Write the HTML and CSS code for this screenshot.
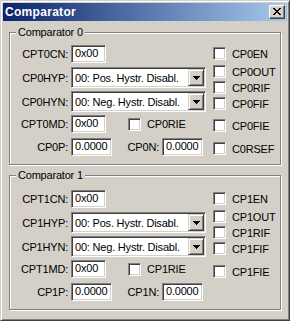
FILE: index.html
```html
<!DOCTYPE html>
<html>
<head>
  <title>Comparator</title>
  <link rel="stylesheet" href="styles.css">
</head>
<body>
<div class="window">
  <div class="titlebar">
    <span class="title">Comparator</span>
    <div class="close">
      <svg width="8" height="7" viewBox="0 0 8 7" shape-rendering="crispEdges">
        <path d="M0 0h2v1h-2z M6 0h2v1h-2z M1 1h2v1h-2z M5 1h2v1h-2z M2 2h4v1h-4z M3 3h2v1h-2z M2 4h4v1h-4z M1 5h2v1h-2z M5 5h2v1h-2z M0 6h2v1h-2z M6 6h2v1h-2z" fill="#000"/>
      </svg>
    </div>
  </div>

  <!-- Comparator 0 -->
  <div class="group g0">
    <span class="legend">Comparator 0</span>
    <div class="cols">
      <div class="left">
        <div class="row r1"><span class="lbl">CPT0CN:</span><span class="edit short">0x00</span></div>
        <div class="row r2"><span class="lbl">CP0HYP:</span>
          <div class="combo"><span class="val">00: Pos. Hystr. Disabl.</span><span class="drop"><svg width="7" height="4" viewBox="0 0 7 4" shape-rendering="crispEdges"><path d="M0 0h7v1h-7z M1 1h5v1h-5z M2 2h3v1h-3z M3 3h1v1h-1z" fill="#000"/></svg></span></div>
        </div>
        <div class="row r3"><span class="lbl">CP0HYN:</span>
          <div class="combo"><span class="val">00: Neg. Hystr. Disabl.</span><span class="drop"><svg width="7" height="4" viewBox="0 0 7 4" shape-rendering="crispEdges"><path d="M0 0h7v1h-7z M1 1h5v1h-5z M2 2h3v1h-3z M3 3h1v1h-1z" fill="#000"/></svg></span></div>
        </div>
        <div class="row r4"><span class="lbl">CPT0MD:</span><span class="edit short">0x00</span>
          <div class="check mid"><span class="box"></span>CP0RIE</div>
        </div>
        <div class="row r5"><span class="lbl">CP0P:</span><span class="edit num">0.0000</span>
          <span class="lbl2">CP0N:</span><span class="edit num">0.0000</span>
        </div>
      </div>
      <div class="right">
        <div class="check c1"><span class="box"></span>CP0EN</div>
        <div class="check c2"><span class="box"></span>CP0OUT</div>
        <div class="check c3"><span class="box"></span>CP0RIF</div>
        <div class="check c4"><span class="box"></span>CP0FIF</div>
        <div class="check c5"><span class="box"></span>CP0FIE</div>
        <div class="check c6"><span class="box"></span>C0RSEF</div>
      </div>
    </div>
  </div>

  <!-- Comparator 1 -->
  <div class="group g1">
    <span class="legend">Comparator 1</span>
    <div class="cols">
      <div class="left">
        <div class="row r1"><span class="lbl">CPT1CN:</span><span class="edit short">0x00</span></div>
        <div class="row r2"><span class="lbl">CP1HYP:</span>
          <div class="combo"><span class="val">00: Pos. Hystr. Disabl.</span><span class="drop"><svg width="7" height="4" viewBox="0 0 7 4" shape-rendering="crispEdges"><path d="M0 0h7v1h-7z M1 1h5v1h-5z M2 2h3v1h-3z M3 3h1v1h-1z" fill="#000"/></svg></span></div>
        </div>
        <div class="row r3"><span class="lbl">CP1HYN:</span>
          <div class="combo"><span class="val">00: Neg. Hystr. Disabl.</span><span class="drop"><svg width="7" height="4" viewBox="0 0 7 4" shape-rendering="crispEdges"><path d="M0 0h7v1h-7z M1 1h5v1h-5z M2 2h3v1h-3z M3 3h1v1h-1z" fill="#000"/></svg></span></div>
        </div>
        <div class="row r4"><span class="lbl">CPT1MD:</span><span class="edit short">0x00</span>
          <div class="check mid"><span class="box"></span>CP1RIE</div>
        </div>
        <div class="row r5"><span class="lbl">CP1P:</span><span class="edit num">0.0000</span>
          <span class="lbl2">CP1N:</span><span class="edit num">0.0000</span>
        </div>
      </div>
      <div class="right">
        <div class="check c1"><span class="box"></span>CP1EN</div>
        <div class="check c2"><span class="box"></span>CP1OUT</div>
        <div class="check c3"><span class="box"></span>CP1RIF</div>
        <div class="check c4"><span class="box"></span>CP1FIF</div>
        <div class="check c5"><span class="box"></span>CP1FIE</div>
      </div>
    </div>
  </div>
</div>
</body>
</html>
```

FILE: styles.css
```css
body {
  margin: 0;
  font-family: "Liberation Sans", Arial, sans-serif;
  font-size: 11px;
  letter-spacing: -0.2px;
  color: #000;
  background: #d4d0c8;
}

/* window frame */
.window {
  width: 290px;
  height: 321px;
  box-sizing: border-box;
  border: 1px solid;
  border-color: #d4d0c8 #404040 #404040 #d4d0c8;
  box-shadow: inset 1px 1px 0 #fff, inset -1px -1px 0 #808080;
  padding: 2px;
  background: #d4d0c8;
}
.titlebar {
  height: 18px;
  display: flex;
  align-items: center;
  justify-content: space-between;
  padding: 0 2px;
  background: linear-gradient(to right, #0a246a, #a6caf0);
}
.title {
  color: #fff;
  font-weight: bold;
  font-size: 12px;
  letter-spacing: 0.3px;
  line-height: 14px;
  margin-top: -1px;
}
.close {
  width: 16px;
  height: 14px;
  box-sizing: border-box;
  border: 1px solid;
  border-color: #fff #404040 #404040 #fff;
  box-shadow: inset -1px -1px 0 #808080;
  background: #d4d0c8;
  display: flex;
  align-items: center;
  justify-content: center;
}
.close svg {
  display: block;
  margin-top: -1px;
}

/* group boxes */
.group {
  position: relative;
  box-sizing: border-box;
  width: 272px;
  margin-left: 6px;
  border: 1px solid #808080;
  box-shadow: 1px 1px 0 #fff, inset 1px 1px 0 #fff;
}
.g0 {
  margin-top: 11px;
  height: 133px;
}
.g1 {
  margin-top: 10px;
  height: 135px;
}
.legend {
  position: absolute;
  top: -7px;
  left: 6px;
  padding: 0 2px;
  line-height: 13px;
  background: #d4d0c8;
}
.cols {
  display: flex;
}
.left {
  width: 203px;
}

/* rows of label + field */
.row {
  display: flex;
  align-items: center;
}
.lbl {
  width: 58px;
  margin-right: 3px;
  text-align: right;
  white-space: nowrap;
}
.lbl2 {
  width: 47px;
  margin-right: 3px;
  text-align: right;
}
.r1 { margin-top: 12px; }
.r2 { margin-top: 4px; }
.r3 { margin-top: 3px; }
.r4 { margin-top: 3px; }
.r5 { margin-top: 5px; }
.g1 .r1 { margin-top: 14px; }

.edit {
  box-sizing: border-box;
  height: 18px;
  line-height: 14px;
  padding-left: 3px;
  border: 1px solid;
  border-color: #808080 #fff #fff #808080;
  box-shadow: inset 1px 1px 0 #404040, inset -1px -1px 0 #d4d0c8;
  background: #fff;
}
.short { width: 35px; }
.num { width: 41px; }

.combo {
  box-sizing: border-box;
  width: 135px;
  height: 21px;
  display: flex;
  align-items: center;
  justify-content: space-between;
  padding: 1px;
  border: 1px solid;
  border-color: #808080 #fff #fff #808080;
  box-shadow: inset 1px 1px 0 #404040, inset -1px -1px 0 #d4d0c8;
  background: #fff;
}
.val {
  padding-left: 2px;
  white-space: nowrap;
}
.drop {
  box-sizing: border-box;
  width: 16px;
  height: 17px;
  display: flex;
  align-items: center;
  justify-content: center;
  border: 1px solid;
  border-color: #d4d0c8 #404040 #404040 #d4d0c8;
  box-shadow: inset 1px 1px 0 #fff, inset -1px -1px 0 #808080;
  background: #d4d0c8;
}
.drop svg {
  display: block;
}

/* checkboxes */
.check {
  display: flex;
  align-items: center;
  height: 13px;
  white-space: nowrap;
}
.box {
  box-sizing: border-box;
  width: 13px;
  height: 13px;
  margin-right: 6px;
  border: 1px solid;
  border-color: #808080 #fff #fff #808080;
  box-shadow: inset 1px 1px 0 #404040, inset -1px -1px 0 #d4d0c8;
  background: #fff;
}
.mid { margin-left: 22px; }
.c1 { margin-top: 14px; }
.c2 { margin-top: 5px; }
.c3 { margin-top: 3px; }
.c4 { margin-top: 3px; }
.c5 { margin-top: 9px; }
.c6 { margin-top: 10px; }
.g1 .c1 { margin-top: 16px; }
.g1 .c5 { margin-top: 10px; }
```
